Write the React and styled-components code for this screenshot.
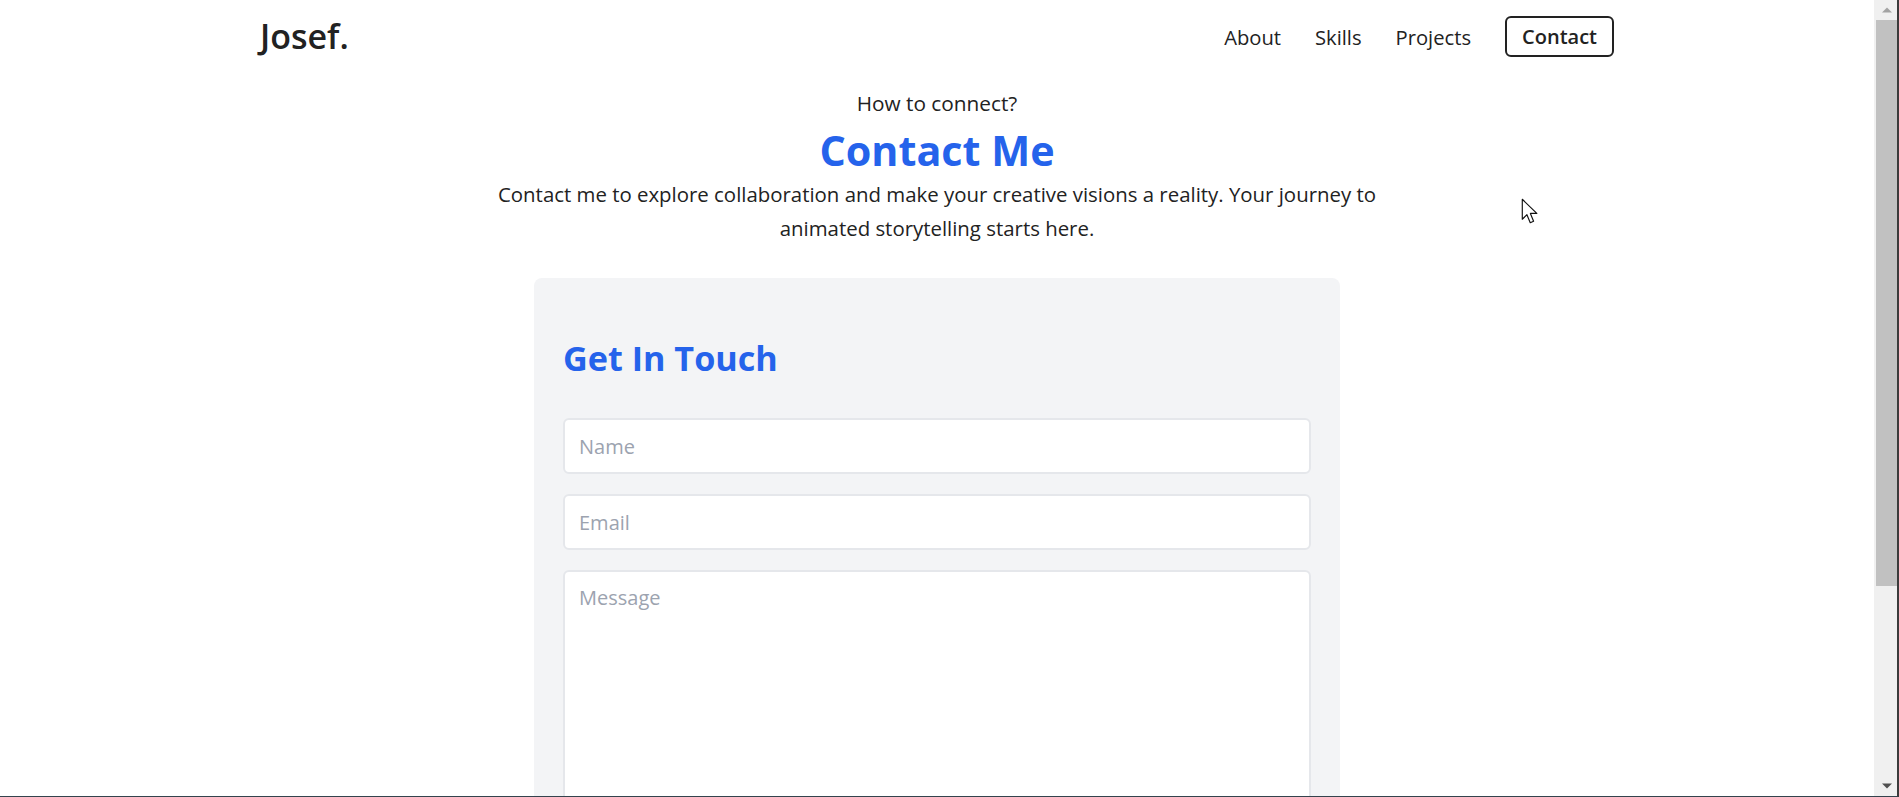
import React from 'react';
import styled, { createGlobalStyle } from 'styled-components';

const GlobalStyle = createGlobalStyle`
  * {
    box-sizing: border-box;
  }

  html,
  body {
    margin: 0;
    padding: 0;
    height: 100%;
    overflow: hidden;
  }

  body {
    font-family: "Open Sans", "Noto Sans", sans-serif;
    color: #222;
    background: #fff;
  }
`;

const App = () => {
  return (
    <>
      <GlobalStyle />
      <Window>
        <Viewport>
          <Nav>
            <Logo>Josef.</Logo>
            <NavLinks>
              <NavLink href="#about">About</NavLink>
              <NavLink href="#skills">Skills</NavLink>
              <NavLink href="#projects">Projects</NavLink>
              <ContactButton href="#contact">Contact</ContactButton>
            </NavLinks>
          </Nav>

          <Section id="contact">
            <Subtitle>How to connect?</Subtitle>
            <Title>Contact Me</Title>
            <Lead>
              Contact me to explore collaboration and make your creative visions a reality. Your
              journey to animated storytelling starts here.
            </Lead>

            <Card>
              <CardTitle>Get In Touch</CardTitle>
              <Form onSubmit={(e) => e.preventDefault()}>
                <Input type="text" placeholder="Name" />
                <Input type="email" placeholder="Email" />
                <TextArea placeholder="Message" />
              </Form>
            </Card>
          </Section>

          {/* mouse pointer captured in the screenshot */}
          <Cursor width="18" height="27" viewBox="0 0 14 21">
            <path
              d="M1 1 L1 16.5 L4.6 13 L7.2 19.2 L9.8 18.1 L7.3 12 L12.3 12 Z"
              fill="#fff"
              stroke="#111"
              strokeWidth="0.9"
              strokeLinejoin="round"
            />
          </Cursor>
        </Viewport>

        <Scrollbar>
          <ArrowButton>
            <svg width="10" height="6" viewBox="0 0 10 6">
              <path d="M0 5.5 L5 0.5 L10 5.5 Z" fill="#a3a3a3" />
            </svg>
          </ArrowButton>
          <Thumb />
          <Track />
          <ArrowButton>
            <svg width="10" height="6" viewBox="0 0 10 6">
              <path d="M0 0.5 L5 5.5 L10 0.5 Z" fill="#505050" />
            </svg>
          </ArrowButton>
        </Scrollbar>
      </Window>
    </>
  );
};

// Styled Components
const Window = styled.div`
  display: flex;
  height: 100vh;
  border-right: 2px solid #3b3b3b;
  border-bottom: 1px solid #34434d;
  overflow: hidden;
`;

const Viewport = styled.div`
  position: relative;
  flex: 1;
  overflow: hidden;
  background: #fff;
`;

const Nav = styled.nav`
  display: flex;
  align-items: center;
  justify-content: space-between;
  width: 1354px;
  margin: 0 auto;
  padding: 16px 0;
`;

const Logo = styled.div`
  font-size: 34px;
  font-weight: 600;
  line-height: 41px;
  color: #222;
`;

const NavLinks = styled.div`
  display: flex;
  align-items: center;
  gap: 34px;
`;

const NavLink = styled.a`
  font-size: 20.2px;
  line-height: 28px;
  color: #222;
  text-decoration: none;
`;

const ContactButton = styled.a`
  display: inline-block;
  padding: 4px 15px;
  border: 2px solid #222;
  border-radius: 6px;
  font-size: 20px;
  font-weight: 600;
  line-height: 29px;
  color: #222;
  text-decoration: none;
`;

const Section = styled.section`
  display: flex;
  flex-direction: column;
  align-items: center;
  text-align: center;
`;

const Subtitle = styled.p`
  margin: 16px 0 0;
  font-size: 20.8px;
  line-height: 28px;
`;

const Title = styled.h1`
  margin: 8px 0 0;
  font-size: 41.3px;
  font-weight: 700;
  line-height: 50px;
  color: #2563eb;
`;

const Lead = styled.p`
  max-width: 920px;
  margin: 2px 0 0;
  font-size: 20.4px;
  line-height: 34px;
`;

const Card = styled.div`
  width: 806px;
  margin-top: 33px;
  padding: 60px 29px 30px;
  background: #f3f4f6;
  border-radius: 8px;
  text-align: left;
`;

const CardTitle = styled.h2`
  margin: 0 0 40px;
  font-size: 34.2px;
  font-weight: 700;
  line-height: 40px;
  color: #2563eb;
`;

const Form = styled.form`
  display: flex;
  flex-direction: column;
  gap: 20px;
`;

const Input = styled.input`
  width: 100%;
  height: 56px;
  padding: 0 14px;
  border: 2px solid #e5e7eb;
  border-radius: 6px;
  background: #fff;
  font-family: inherit;
  font-size: 20px;
  color: #222;
  outline: none;

  &::placeholder {
    color: #9ca3af;
  }
`;

const TextArea = styled.textarea`
  width: 100%;
  height: 300px;
  padding: 12px 14px;
  border: 2px solid #e5e7eb;
  border-radius: 6px;
  background: #fff;
  font-family: inherit;
  font-size: 20px;
  line-height: 28px;
  color: #222;
  resize: none;
  outline: none;

  &::placeholder {
    color: #9ca3af;
  }
`;

const Cursor = styled.svg`
  position: absolute;
  left: 1521px;
  top: 198px;
  pointer-events: none;
`;

const Scrollbar = styled.div`
  display: flex;
  flex-direction: column;
  width: 23px;
  background: #f0f0f0;
`;

const ArrowButton = styled.div`
  display: flex;
  align-items: center;
  justify-content: center;
  height: 20px;
  padding-left: 2px;
`;

const Thumb = styled.div`
  height: 566px;
  margin-left: 2px;
  background: #c1c1c1;
`;

const Track = styled.div`
  flex: 1;
`;

export default App;
